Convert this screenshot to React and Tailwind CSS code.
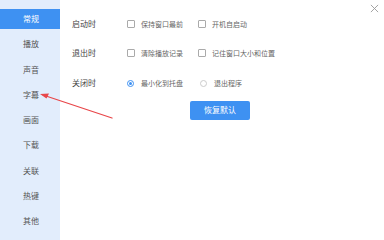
const MENU = ['常规', '播放', '声音', '字幕', '画面', '下载', '关联', '热键', '其他'];

const FONT = { fontFamily: '"Noto Sans CJK SC", "Noto Sans", sans-serif' };

export default function App() {
  return (
    <div className="relative flex w-[384px] h-[240px] bg-white overflow-hidden" style={FONT}>
      <Sidebar active="常规" />
      <main className="flex-1 pl-[12px] pt-[17px]">
        <Row label="启动时">
          <Check label="保持窗口最前" />
          <Check label="开机自启动" />
        </Row>
        <Row label="退出时" className="mt-[15px]">
          <Check label="清除播放记录" />
          <Check label="记住窗口大小和位置" />
        </Row>
        <Row label="关闭时" className="mt-[16px]">
          <Radio label="最小化到托盘" checked />
          <Radio label="退出程序" />
        </Row>
        <div className="pl-[118px] mt-[4px]">
          <button className="w-[60px] h-[19px] rounded-[2px] bg-[#3e91f2] text-white text-[8px] leading-none">
            恢复默认
          </button>
        </div>
      </main>
      <button className="absolute right-[5px] top-[4px] text-[#9a9a9a]">
        <svg width="9" height="9" viewBox="0 0 10 10" stroke="currentColor" strokeWidth="1">
          <path d="M1 1l8 8M9 1l-8 8" />
        </svg>
      </button>
      <Arrow />
    </div>
  );
}

function Sidebar({ active }) {
  return (
    <nav className="w-[60px] h-full bg-[#e2edfc] pt-[9px] flex flex-col gap-[5.25px]">
      {MENU.map((m) => (
        <div
          key={m}
          className={`h-[20px] flex items-center justify-center text-[8px] ${
            m === active ? 'bg-[#3e91f2] text-white' : 'text-[#555]'
          }`}
        >
          <span className="pl-[2px]">{m}</span>
        </div>
      ))}
    </nav>
  );
}

function Row({ label, children, className = '' }) {
  return (
    <div className={`flex items-center h-[14px] ${className}`}>
      <div className="w-[55px] text-[8px] text-[#444]">{label}</div>
      {children}
    </div>
  );
}

function Check({ label }) {
  return (
    <div className="w-[71px] flex items-center text-[7px] text-[#666] whitespace-nowrap">
      <span className="w-[8px] h-[8px] border border-[#aaa] rounded-[1px] bg-white mr-[6px] shrink-0" />
      {label}
    </div>
  );
}

function Radio({ label, checked }) {
  return (
    <div className="w-[73px] flex items-center text-[7px] text-[#666] whitespace-nowrap">
      <span
        className={`w-[7px] h-[7px] rounded-full mr-[7px] shrink-0 flex items-center justify-center border ${
          checked ? 'border-[#3e91f2]' : 'border-[#ccc]'
        }`}
      >
        {checked && <span className="w-[3px] h-[3px] rounded-full bg-[#3e91f2]" />}
      </span>
      {label}
    </div>
  );
}

function Arrow() {
  return (
    <svg className="absolute left-0 top-0 pointer-events-none" width="384" height="240">
      <path d="M112 118 L43 95" stroke="#e8474a" strokeWidth="1.3" strokeLinecap="round" />
      <path d="M40 94 L49 93.5 L46.5 98.5 Z" fill="#e8474a" />
    </svg>
  );
}
